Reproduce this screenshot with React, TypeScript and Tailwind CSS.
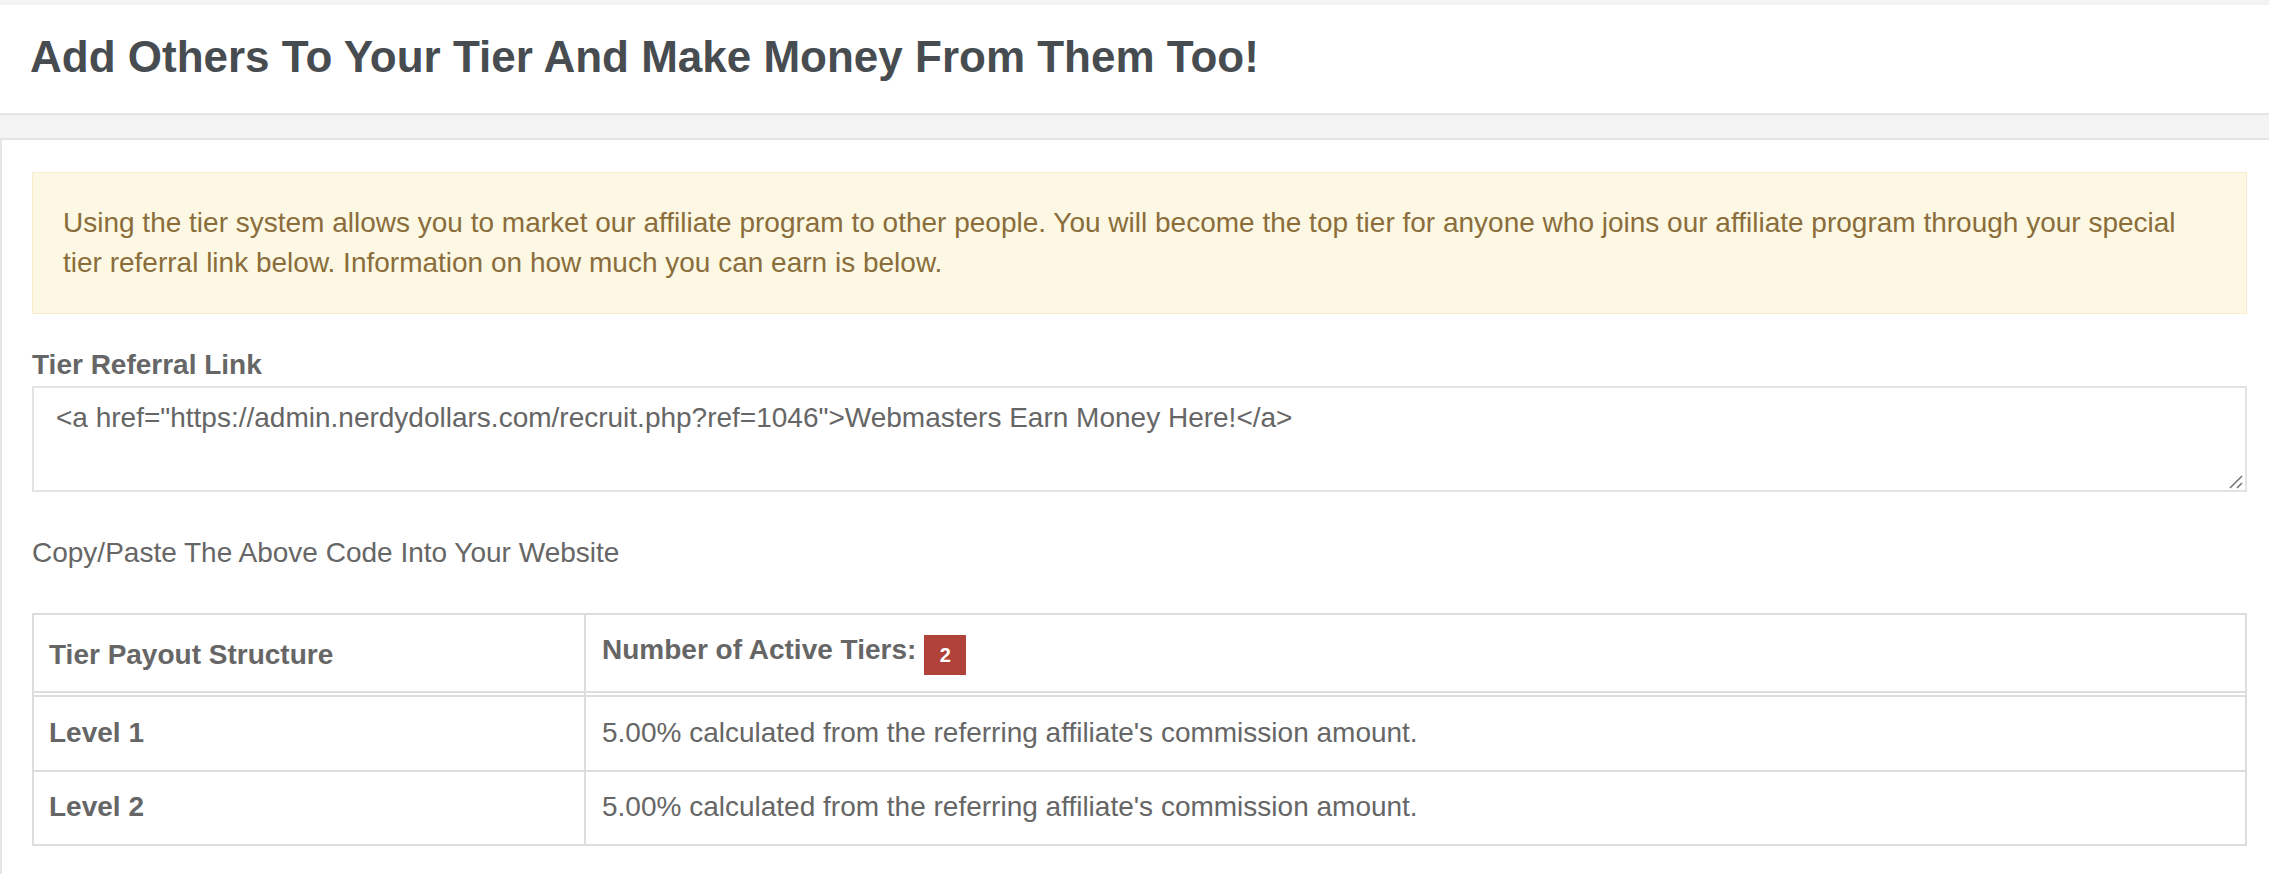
const link = '<a href="https://admin.nerdydollars.com/recruit.php?ref=1046">Webmasters Earn Money Here!</a>'

const levels = [
  { name: "Level 1", text: "5.00% calculated from the referring affiliate's commission amount.", h: "h-[75px] border-b-2 pt-[16px]" },
  { name: "Level 2", text: "5.00% calculated from the referring affiliate's commission amount.", h: "h-[72px] pt-[15px]" },
]

export default function App() {
  return (
    <div className="min-h-screen bg-[#f3f3f3] pt-[5px] font-['Liberation_Sans',Arial,sans-serif] text-[28px] leading-[40px] text-[#666]">
      <header className="h-[110px] bg-white border-b-2 border-[#e5e5e5] pl-[30px] pt-[26px]">
        <h1 className="text-[44px] leading-[52px] font-bold text-[#474c51]">Add Others To Your Tier And Make Money From Them Too!</h1>
      </header>

      <main className="mt-[23px] bg-white border-t-2 border-l-2 border-[#e5e5e5] pl-[30px] pr-[22px] pt-[32px] pb-[40px]">
        <div className="bg-[#fcf8e3] border border-[#faebcc] text-[#8a6d3b] p-[30px]">
          Using the tier system allows you to market our affiliate program to other people. You will become the top tier for anyone who joins our affiliate program through your special tier referral link below. Information on how much you can earn is below.
        </div>

        <label className="block mt-[31px] mb-[1px] font-bold">Tier Referral Link</label>
        <div className="relative">
          <textarea
            readOnly
            defaultValue={link}
            className="block w-full h-[106px] resize-none border-2 border-[#e3e3e3] bg-white pt-[10px] px-[22px] text-[#666] outline-none"
          />
          {/* resize grip */}
          <svg className="absolute right-[4px] bottom-[3px] w-[14px] h-[14px]" viewBox="0 0 14 14">
            <path d="M1 13 L13 1 M8 13 L13 8" stroke="#777" strokeWidth="1.6" fill="none" />
          </svg>
        </div>

        <p className="mt-[41px]">Copy/Paste The Above Code Into Your Website</p>

        <div className="mt-[40px] border-2 border-[#ddd]">
          <div className="grid grid-cols-[552px_1fr] h-[78px] border-b-2 border-[#ddd]">
            <div className="border-r-2 border-[#ddd] flex items-end px-[15px] pb-[16px] font-bold">Tier Payout Structure</div>
            <div className="flex items-end px-[16px] pb-[16px] font-bold">
              <span className="mb-[5px]">Number of Active Tiers:</span>
              <span className="ml-[8px] w-[42px] h-[40px] bg-[#b0423a] text-white text-[20px] leading-[40px] text-center">2</span>
            </div>
          </div>
          <div className="grid grid-cols-[552px_1fr] h-[4px] border-b-2 border-[#ddd]">
            <div className="border-r-2 border-[#ddd]" />
            <div />
          </div>
          {levels.map((l) => (
            <div key={l.name} className={`grid grid-cols-[552px_1fr] border-[#ddd] ${l.h}`}>
              <div className="border-r-2 border-[#ddd] px-[15px] font-bold -mt-[16px] pt-[16px]">{l.name}</div>
              <div className="px-[16px]">{l.text}</div>
            </div>
          ))}
        </div>
      </main>
    </div>
  )
}
